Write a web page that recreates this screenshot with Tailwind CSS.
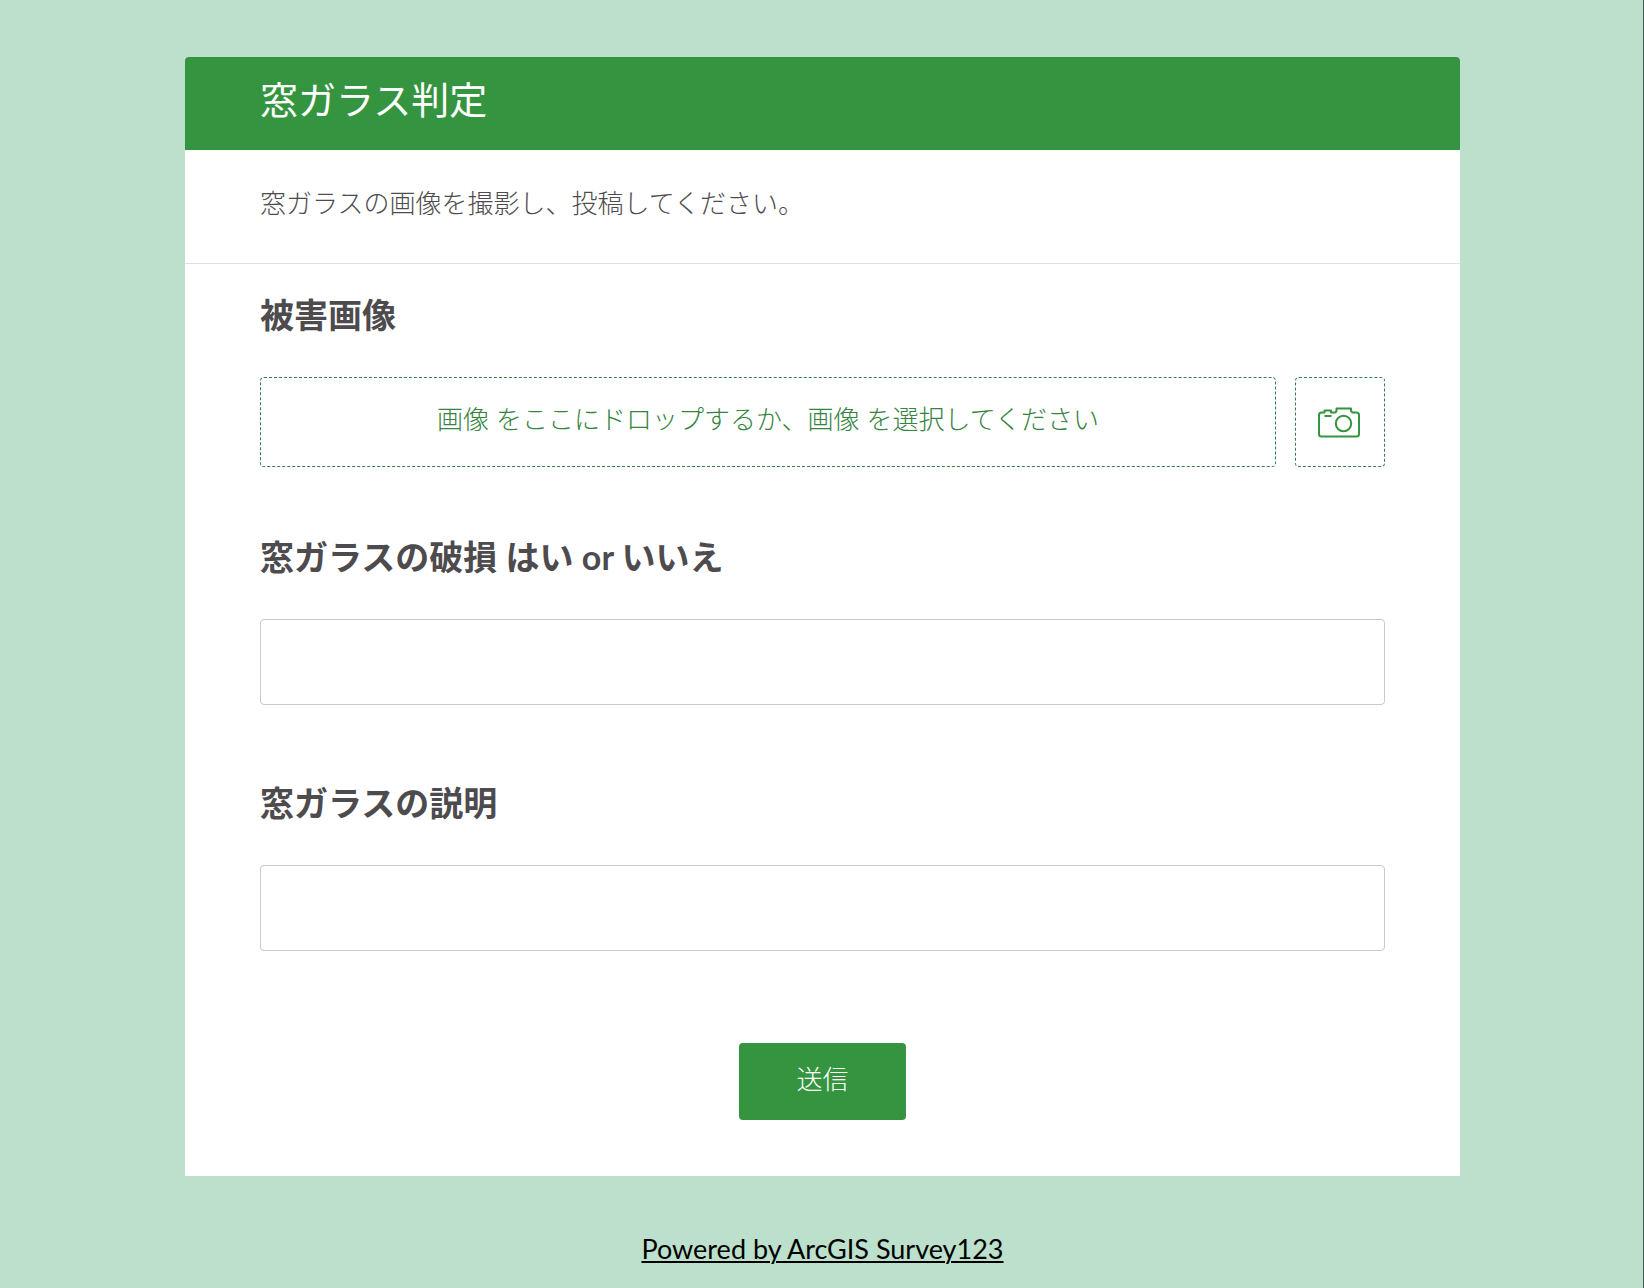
<!DOCTYPE html>
<html lang="ja">
<head>
  <meta charset="UTF-8">
  <meta name="viewport" content="width=device-width, initial-scale=1.0">
  <title>窓ガラス判定</title>
  <script src="https://cdn.jsdelivr.net/npm/@tailwindcss/browser@4"></script>
</head>
<body class="min-h-screen border-r border-[#3f5550] bg-[#bce0cc] pl-0.5 pt-[57px] font-['Lato','Noto_Sans_CJK_JP',sans-serif] text-[#4d4b4d]">
  <main class="mx-auto max-w-[1275px] overflow-hidden rounded-t bg-white">
    <header class="bg-[#35943f] px-[75px] pt-[15px] pb-6">
      <h1 class="text-[38px] leading-[54px] font-normal text-white">窓ガラス判定</h1>
    </header>
    <p class="border-b border-[#e0e0e0] px-[75px] pt-[33px] pb-10 text-[26px] leading-[40px] font-light">窓ガラスの画像を撮影し、投稿してください。</p>

    <form class="px-[75px] pt-[26px] pb-14">
      <section>
        <h2 class="text-[34px] leading-[50px] font-bold">被害画像</h2>
        <div class="mt-[37px] flex gap-[19px]">
          <button type="button" class="h-[90px] grow rounded border border-dashed border-[#35804a] pb-[6px] text-[26px] leading-[40px] font-light text-[#35843f]">画像 をここにドロップするか、画像 を選択してください</button>
          <button type="button" aria-label="カメラ" class="flex size-[90px] items-center justify-center rounded border border-dashed border-[#35804a] pr-[3px] text-[#35943f]">
            <svg class="h-[31px] w-[42px]" viewBox="0 0 42 31" fill="none" stroke="currentColor" stroke-width="2" stroke-linejoin="round" stroke-linecap="butt">
              <path d="M3.5 5.5H6.5V3.5H13V5.5H17.5L18.5 4V1.5H33V4L34.5 5.5H38.5Q41 5.5 41 8V27Q41 29.5 38.5 29.5H3.5Q1 29.5 1 27V8Q1 5.5 3.5 5.5Z"/>
              <path d="M6.5 9H13.5"/>
              <circle cx="25.5" cy="16.5" r="7.7"/>
            </svg>
          </button>
        </div>
      </section>

      <section class="mt-[65px]">
        <label for="damage" class="block text-[34px] leading-[50px] font-bold">窓ガラスの破損 はい or いいえ</label>
        <input id="damage" type="text" class="mt-[37px] h-[86px] w-full rounded border border-[#cacaca] px-5 text-[26px] outline-none">
      </section>

      <section class="mt-[73px]">
        <label for="description" class="block text-[34px] leading-[50px] font-bold">窓ガラスの説明</label>
        <input id="description" type="text" class="mt-[37px] h-[86px] w-full rounded border border-[#cacaca] px-5 text-[26px] outline-none">
      </section>

      <button type="submit" class="mx-auto mt-[92px] block h-[77px] w-[167px] rounded bg-[#35943f] pb-[6px] text-[26px] leading-[40px] font-light text-white">送信</button>
    </form>
  </main>

  <footer class="pt-[53px] text-center">
    <a href="#" class="text-[27px] leading-[40px] text-black underline decoration-2 underline-offset-2">Powered by ArcGIS Survey123</a>
  </footer>
</body>
</html>
